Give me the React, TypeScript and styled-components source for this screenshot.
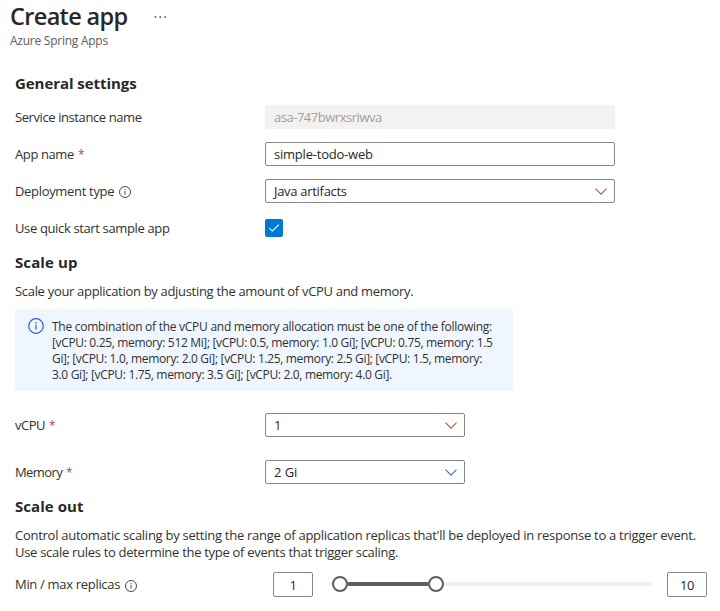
import React from "react";
import styled, { createGlobalStyle } from "styled-components";

const GlobalStyle = createGlobalStyle`
  * { box-sizing: border-box; }
  body {
    margin: 0;
    background: #fff;
    color: #323130;
    font: 400 13px/17px "Open Sans", "Noto Sans", sans-serif;
    overflow: hidden;
  }
`;

const Text = styled.span<{ $track?: number }>`
  letter-spacing: ${(p) => p.$track ?? -0.32}px;
  white-space: nowrap;
`;

const Page = styled.main`
  display: flex;
  flex-direction: column;
  width: 720px;
  height: 611px;
  overflow: hidden;
`;

const Header = styled.header`
  display: flex;
  flex-direction: column;
  height: 73px;
  padding: 1px 10px 0;
`;

const TitleRow = styled.div`
  display: flex;
  gap: 26px;
  height: 31px;
`;

const Title = styled.h1`
  margin: 0;
  font-size: 23.5px;
  font-weight: 600;
  line-height: 31px;
  color: #292827;
`;

const MoreIcon = styled.svg`
  width: 13px;
  height: 4px;
  margin-top: 14px;
  fill: #605e5c;
`;

const Subtitle = styled.div`
  font-size: 12px;
  line-height: 18px;
  color: #605e5c;
`;

const Section = styled.section`
  display: flex;
  flex-direction: column;
  padding: 0 13px 0 15px;
`;

const Heading = styled.h2`
  margin: 0;
  height: 20px;
  font-size: 15px;
  font-weight: 700;
  line-height: 20px;
  color: #292827;
`;

const Fields = styled.div<{ $gap: number; $top: number }>`
  display: flex;
  flex-direction: column;
  gap: ${(p) => p.$gap}px;
  padding: ${(p) => p.$top}px 0 12px;
`;

const Field = styled.div`
  display: grid;
  grid-template-columns: 250px auto;
  align-items: center;
  justify-content: start;
  height: 24px;
`;

const Label = styled.label`
  display: flex;
  align-items: center;
`;

const Required = styled.span`
  margin-left: 4px;
  font-size: 12px;
  color: #b5484d;
`;

const Box = styled.div<{ $width: number; $disabled?: boolean }>`
  display: flex;
  align-items: center;
  justify-content: space-between;
  width: ${(p) => p.$width}px;
  height: 24px;
  padding: 0 7px 0 8px;
  border: 1px solid ${(p) => (p.$disabled ? "#f3f2f1" : "#8a8886")};
  border-radius: 2px;
  background: ${(p) => (p.$disabled ? "#f3f2f1" : "#fff")};
  color: ${(p) => (p.$disabled ? "#a19f9d" : "#292827")};
`;

const ChevronIcon = styled.svg<{ $color: string }>`
  width: 12px;
  height: 7px;
  margin-top: 1px;
  fill: none;
  stroke: ${(p) => p.$color};
  stroke-width: 1.15;
`;

const Checkbox = styled.div`
  display: flex;
  width: 18px;
  height: 18px;
  border-radius: 2px;
  background: #0078d4;
`;

const CheckIcon = styled.svg`
  width: 18px;
  height: 18px;
  fill: none;
  stroke: #fff;
  stroke-width: 1.1;
`;

const InfoSvg = styled.svg<{ $size: number; $color: string }>`
  flex: none;
  width: ${(p) => p.$size}px;
  height: ${(p) => p.$size}px;
  color: ${(p) => p.$color};
`;

const HintIcon = styled.span`
  display: flex;
  margin: 2px 0 0 5px;
`;

const Notice = styled.aside`
  display: flex;
  gap: 8.5px;
  width: 498px;
  height: 82px;
  margin-top: 9px;
  padding: 9px 12px 0 12.5px;
  background: #f0f6ff;
`;

const NoticeLines = styled.div`
  display: flex;
  flex-direction: column;
  padding-top: 1px;
  font-size: 12px;
  line-height: 16px;
`;

const Description = styled.div`
  display: flex;
  flex-direction: column;
  padding-top: 11px;
`;

const ReplicasRow = styled.div`
  display: grid;
  grid-template-columns: 258px 40px 354px 40px;
  align-items: center;
  height: 25px;
  margin-top: 11px;
`;

const NumberBox = styled.div`
  display: flex;
  align-items: center;
  justify-content: center;
  height: 25px;
  padding-top: 1px;
  border: 1px solid #8a8886;
  border-radius: 2px;
  color: #292827;
`;

const Slider = styled.div`
  display: flex;
  align-items: center;
  align-self: start;
  height: 16px;
  margin: 4px 16px 0;
`;

const Track = styled.div<{ $width?: number; $active?: boolean }>`
  flex: ${(p) => (p.$width ? `0 0 ${p.$width}px` : "1")};
  height: 4px;
  border-radius: ${(p) => (p.$active ? 0 : 2)}px;
  background: ${(p) => (p.$active ? "#605e5c" : "#f0f0f0")};
`;

const Thumb = styled.div`
  flex: none;
  width: 16px;
  height: 16px;
  border: 2px solid #605e5c;
  border-radius: 50%;
  background: #fff;
`;

const Chevron = ({ color }: { color: string }) => (
  <ChevronIcon viewBox="0 0 12 7" $color={color}>
    <path d="M.5.7 6 6.1 11.5.7" />
  </ChevronIcon>
);

const Info = ({ size, color }: { size: number; color: string }) => (
  <InfoSvg viewBox="0 0 16 16" $size={size} $color={color}>
    <circle cx="8" cy="8" r="7.3" fill="none" stroke="currentColor" strokeWidth="1.2" />
    <path d="M8 6.8v4.8" stroke="currentColor" strokeWidth="1.2" />
    <circle cx="8" cy="4.9" r=".8" fill="currentColor" />
  </InfoSvg>
);

const noticeLines: [string, number][] = [
  ["The combination of the vCPU and memory allocation must be one of the following:", -0.264],
  ["[vCPU: 0.25, memory: 512 Mi]; [vCPU: 0.5, memory: 1.0 Gi]; [vCPU: 0.75, memory: 1.5", -0.341],
  ["Gi]; [vCPU: 1.0, memory: 2.0 Gi]; [vCPU: 1.25, memory: 2.5 Gi]; [vCPU: 1.5, memory:", -0.339],
  ["3.0 Gi]; [vCPU: 1.75, memory: 3.5 Gi]; [vCPU: 2.0, memory: 4.0 Gi].", -0.33],
];

export default function App() {
  return (
    <>
      <GlobalStyle />
      <Page>
        <Header>
          <TitleRow>
            <Title><Text $track={-0.65}>Create app</Text></Title>
            <MoreIcon viewBox="0 0 13 4">
              <circle cx="1.5" cy="2" r=".9" />
              <circle cx="6.3" cy="2" r=".9" />
              <circle cx="11.1" cy="2" r=".9" />
            </MoreIcon>
          </TitleRow>
          <Subtitle><Text $track={-0.25}>Azure Spring Apps</Text></Subtitle>
        </Header>

        <Section>
          <Heading><Text $track={-0.056}>General settings</Text></Heading>
          <Fields $gap={13} $top={12}>
            <Field>
              <Label><Text $track={-0.41}>Service instance name</Text></Label>
              <Box $width={350} $disabled><Text $track={-0.477}>asa-747bwrxsriwva</Text></Box>
            </Field>
            <Field>
              <Label><Text $track={-0.391}>App name</Text><Required>*</Required></Label>
              <Box $width={350}><Text $track={-0.215}>simple-todo-web</Text></Box>
            </Field>
            <Field>
              <Label>
                <Text $track={-0.323}>Deployment type</Text>
                <HintIcon><Info size={12} color="#323130" /></HintIcon>
              </Label>
              <Box $width={350}><Text $track={-0.3}>Java artifacts</Text><Chevron color="#b5573a" /></Box>
            </Field>
            <Field>
              <Label><Text $track={-0.36}>Use quick start sample app</Text></Label>
              <Checkbox>
                <CheckIcon viewBox="0 0 18 18"><path d="m4.3 9.1 3 3 6.6-6.5" /></CheckIcon>
              </Checkbox>
            </Field>
          </Fields>
        </Section>

        <Section>
          <Heading><Text $track={0.11}>Scale up</Text></Heading>
          <Description>
            <Text $track={-0.31}>Scale your application by adjusting the amount of vCPU and memory.</Text>
          </Description>
          <Notice>
            <Info size={16} color="#1f5fd6" />
            <NoticeLines>
              {noticeLines.map(([line, track]) => <Text key={line} $track={track}>{line}</Text>)}
            </NoticeLines>
          </Notice>
          <Fields $gap={23} $top={22}>
            <Field>
              <Label><Text $track={-0.5}>vCPU</Text><Required>*</Required></Label>
              <Box $width={200}><Text>1</Text><Chevron color="#b5573a" /></Box>
            </Field>
            <Field>
              <Label><Text $track={-0.6}>Memory</Text><Required>*</Required></Label>
              <Box $width={200}><Text $track={-0.087}>2 Gi</Text><Chevron color="#3f6fb8" /></Box>
            </Field>
          </Fields>
        </Section>

        <Section>
          <Heading><Text $track={0.06}>Scale out</Text></Heading>
          <Description>
            <Text $track={-0.268}>Control automatic scaling by setting the range of application replicas that'll be deployed in response to a trigger event.</Text>
            <Text $track={-0.295}>Use scale rules to determine the type of events that trigger scaling.</Text>
          </Description>
          <ReplicasRow>
            <Label>
              <Text $track={-0.311}>Min / max replicas</Text>
              <HintIcon><Info size={12} color="#323130" /></HintIcon>
            </Label>
            <NumberBox><Text>1</Text></NumberBox>
            <Slider>
              <Track $width={3} />
              <Thumb />
              <Track $width={80} $active />
              <Thumb />
              <Track />
            </Slider>
            <NumberBox><Text>10</Text></NumberBox>
          </ReplicasRow>
        </Section>
      </Page>
    </>
  );
}
